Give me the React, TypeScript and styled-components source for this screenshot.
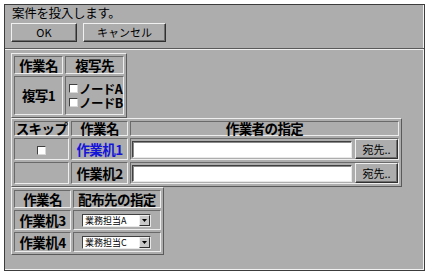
import React from 'react';
import styled, { createGlobalStyle } from 'styled-components';

const GlobalStyle = createGlobalStyle`
  html, body {
    margin: 0;
    padding: 0;
    background: #ffffff;
  }
  * {
    box-sizing: border-box;
  }
`;

const FONT = `"Noto Sans CJK JP", "Noto Sans", sans-serif`;

const Frame = styled.div`
  margin: 4px 0 0 4px;
  width: 421px;
  height: 267px;
  background: #adadad;
  border: 1px solid #3c3c3c;
  box-shadow: inset -1px -1px 0 #f2f2f2;
  font-family: ${FONT};
  color: #000;
  padding: 1px 0 0 5px;
  overflow: hidden;
`;

const Title = styled.div`
  font-size: 12.5px;
  line-height: 14px;
  padding: 0 0 0 2px;
  height: 14px;
  letter-spacing: -0.3px;
`;

const ButtonRow = styled.div`
  display: flex;
  gap: 6px;
  margin: 3px 0 0 1px;
`;

const Button = styled.button<{ w: number }>`
  width: ${({ w }) => w}px;
  height: 19px;
  padding: 0;
  font-family: ${FONT};
  font-size: 11px;
  line-height: 15px;
  color: #000;
  background: #adadad;
  border: 1px solid;
  border-color: #f0f0f0 #303030 #303030 #f0f0f0;
  box-shadow: inset -1px -1px 0 #6e6e6e;
`;

const Rule = styled.div`
  margin: 6px 0 0 -5px;
  width: 419px;
  border-top: 1px solid #5a5a5a;
  border-bottom: 1px solid #f0f0f0;
`;

const Table = styled.table<{ w: number; mt: number }>`
  width: ${({ w }) => w}px;
  margin: ${({ mt }) => mt}px 0 0 1px;
  border-collapse: separate;
  border-spacing: 2px;
  border: 1px solid;
  border-color: #eeeeee #5a5a5a #5a5a5a #eeeeee;
  table-layout: fixed;
`;

const Cell = styled.td<{ h: number; blue?: boolean; align?: string }>`
  height: ${({ h }) => h}px;
  border: 1px solid;
  border-color: #6a6a6a #eeeeee #eeeeee #6a6a6a;
  padding: 0;
  font-size: 13.5px;
  line-height: 13px;
  font-weight: 700;
  letter-spacing: -0.6px;
  text-align: ${({ align }) => align || 'center'};
  vertical-align: middle;
  color: ${({ blue }) => (blue ? '#1414d8' : '#000')};
  white-space: nowrap;
`;

const CheckList = styled.div`
  display: flex;
  flex-direction: column;
  padding-left: 3px;
`;

const CheckLine = styled.label`
  display: flex;
  align-items: center;
  gap: 1px;
  height: 14px;
  font-size: 12.5px;
  line-height: 14px;
  font-weight: 700;
  letter-spacing: -0.6px;
`;

const Box = styled.span`
  display: inline-block;
  width: 9px;
  height: 9px;
  background: #ffffff;
  border: 1px solid;
  border-color: #404040 #d8d8d8 #d8d8d8 #404040;
  vertical-align: middle;
`;

const TextInput = styled.input`
  width: 221px;
  height: 17px;
  padding: 0 2px;
  background: #ffffff;
  border: 1px solid;
  border-color: #404040 #e8e8e8 #e8e8e8 #404040;
  box-shadow: inset 1px 1px 0 #8a8a8a;
`;

const SmallButton = styled.button`
  width: 43px;
  height: 20px;
  margin-left: 3px;
  padding: 0;
  font-family: ${FONT};
  font-size: 11px;
  line-height: 14px;
  font-weight: 400;
  letter-spacing: 0;
  color: #000;
  background: #adadad;
  border: 1px solid;
  border-color: #f0f0f0 #303030 #303030 #f0f0f0;
  box-shadow: inset -1px -1px 0 #6e6e6e;
`;

const InputCell = styled.div`
  display: flex;
  align-items: center;
  padding-left: 1px;
`;

const Select = styled.div`
  display: flex;
  align-items: center;
  width: 69px;
  height: 13px;
  margin-left: 8px;
  background: #ffffff;
  border: 1px solid;
  border-color: #404040 #e8e8e8 #e8e8e8 #404040;
  font-size: 9px;
  font-weight: 400;
  line-height: 11px;
  letter-spacing: 0;
`;

const SelectText = styled.span`
  flex: 1;
  padding-left: 2px;
  text-align: left;
  white-space: nowrap;
`;

const Arrow = styled.span`
  width: 11px;
  height: 11px;
  background: #c8c8c8;
  border: 1px solid;
  border-color: #f0f0f0 #303030 #303030 #f0f0f0;
  display: flex;
  align-items: center;
  justify-content: center;
`;

function SelectBox({ value }: { value: string }) {
  return (
    <Select>
      <SelectText>{value}</SelectText>
      <Arrow>
        <svg width="5" height="3" viewBox="0 0 5 3">
          <path d="M0 0 L5 0 L2.5 3 Z" fill="#000" />
        </svg>
      </Arrow>
    </Select>
  );
}

const workers = [
  { name: '作業机1', blue: true },
  { name: '作業机2', blue: false },
];

const dests = [
  { name: '作業机3', value: '業務担当A' },
  { name: '作業机4', value: '業務担当C' },
];

export default function App() {
  return (
    <>
      <GlobalStyle />
      <Frame>
        <Title>案件を投入します。</Title>
        <ButtonRow>
          <Button w={66}>OK</Button>
          <Button w={83}>キャンセル</Button>
        </ButtonRow>
        <Rule />

        <Table w={116} mt={3}>
          <colgroup>
            <col style={{ width: 49 }} />
            <col style={{ width: 59 }} />
          </colgroup>
          <tbody>
            <tr>
              <Cell h={18}>作業名</Cell>
              <Cell h={18}>複写先</Cell>
            </tr>
            <tr>
              <Cell h={39}>複写1</Cell>
              <Cell h={39} align="left">
                <CheckList>
                  <CheckLine>
                    <Box />
                    ノードA
                  </CheckLine>
                  <CheckLine>
                    <Box />
                    ノードB
                  </CheckLine>
                </CheckList>
              </Cell>
            </tr>
          </tbody>
        </Table>

        <Table w={391} mt={0}>
          <colgroup>
            <col style={{ width: 55 }} />
            <col style={{ width: 57 }} />
            <col style={{ width: 269 }} />
          </colgroup>
          <tbody>
            <tr>
              <Cell h={15}>スキップ</Cell>
              <Cell h={15}>作業名</Cell>
              <Cell h={15}>作業者の指定</Cell>
            </tr>
            {workers.map((w, i) => (
              <tr key={w.name}>
                <Cell h={22}>{i === 0 && <Box />}</Cell>
                <Cell h={22} blue={w.blue}>
                  {w.name}
                </Cell>
                <Cell h={22} align="left">
                  <InputCell>
                    <TextInput />
                    <SmallButton>宛先..</SmallButton>
                  </InputCell>
                </Cell>
              </tr>
            ))}
          </tbody>
        </Table>

        <Table w={153} mt={0}>
          <colgroup>
            <col style={{ width: 57 }} />
            <col style={{ width: 88 }} />
          </colgroup>
          <tbody>
            <tr>
              <Cell h={18}>作業名</Cell>
              <Cell h={18}>配布先の指定</Cell>
            </tr>
            {dests.map((d) => (
              <tr key={d.name}>
                <Cell h={20}>{d.name}</Cell>
                <Cell h={20} align="left">
                  <SelectBox value={d.value} />
                </Cell>
              </tr>
            ))}
          </tbody>
        </Table>
      </Frame>
    </>
  );
}
